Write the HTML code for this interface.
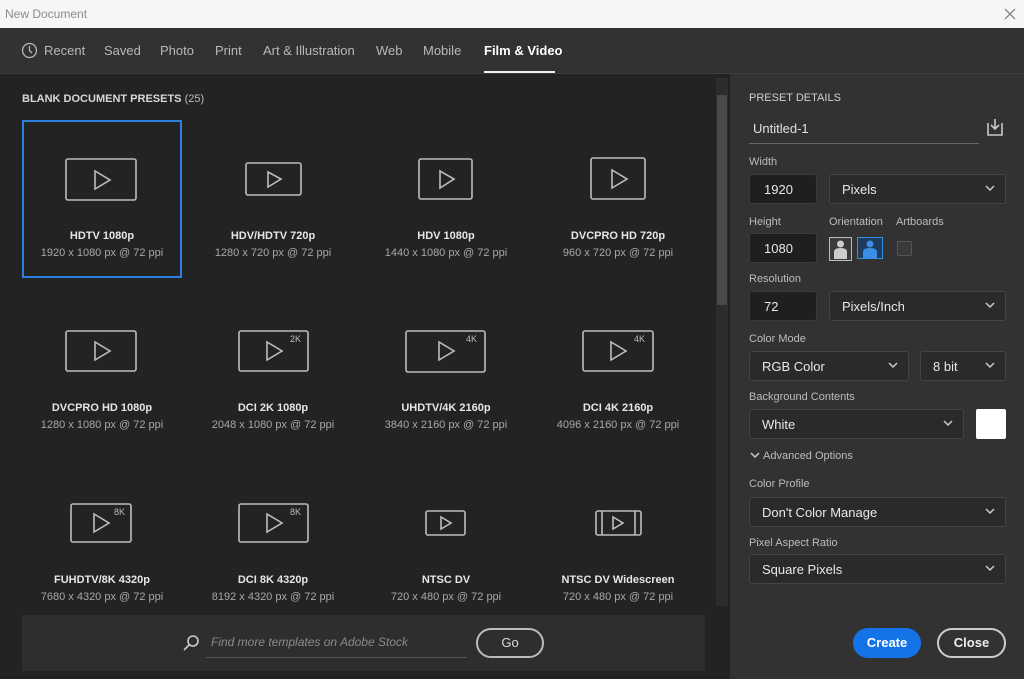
<!DOCTYPE html>
<html><head><meta charset="utf-8"><style>
*{margin:0;padding:0;box-sizing:border-box}
body{width:1024px;height:679px;overflow:hidden;background:#232323;font-family:"Liberation Sans",sans-serif;position:relative;color:#ddd}
.a{position:absolute}
.tab{position:absolute;top:43px;font-size:13px;color:#b8b8b8}
.nm{position:absolute;width:172px;text-align:center;font-size:11px;color:#e6e6e6;font-weight:bold}
.sb{position:absolute;width:172px;text-align:center;font-size:11px;color:#a8a8a8}
.lb{position:absolute;left:749px;font-size:11px;color:#bcbcbc}
.in{position:absolute;background:#1f1f1f;border:1px solid #3a3a3a;border-radius:3px;font-size:13px;color:#e8e8e8;padding-left:14px;display:flex;align-items:center}
.se{position:absolute;background:#2a2a2a;border:1px solid #444;border-radius:3px;font-size:13px;color:#e8e8e8;padding-left:12px;display:flex;align-items:center}
.se svg{position:absolute;right:10px;top:50%;margin-top:-4px}
</style></head><body>
<div class="a" style="left:0;top:0;width:1024px;height:28px;background:#f6f6f6"></div>
<div class="a" style="left:5px;top:7px;font-size:12px;color:#8a8a8a">New Document</div>
<svg class="a" style="left:1004px;top:8px" width="12" height="12"><path d="M1 1L11 11M11 1L1 11" stroke="#888" stroke-width="1.3"/></svg>
<div class="a" style="left:0;top:28px;width:1024px;height:46px;background:#323232;border-bottom:1px solid #3c3c3c"></div>
<svg class="a" style="left:21px;top:42px" width="17" height="17"><circle cx="8.5" cy="8.5" r="7" fill="none" stroke="#b8b8b8" stroke-width="1.3"/><path d="M8.5 4V8.5L11 11" fill="none" stroke="#b8b8b8" stroke-width="1.3"/></svg>
<div class="tab" style="left:44px">Recent</div>
<div class="tab" style="left:104px">Saved</div>
<div class="tab" style="left:160px">Photo</div>
<div class="tab" style="left:215px">Print</div>
<div class="tab" style="left:263px">Art &amp; Illustration</div>
<div class="tab" style="left:376px">Web</div>
<div class="tab" style="left:423px">Mobile</div>
<div class="tab" style="left:484px;color:#fff;font-weight:bold">Film &amp; Video</div>
<div class="a" style="left:484px;top:71px;width:71px;height:2px;background:#eee"></div>
<div class="a" style="left:730px;top:74px;width:294px;height:605px;background:#323232"></div>
<div class="a" style="left:22px;top:93px;font-size:11px;color:#d8d8d8;font-weight:bold">BLANK DOCUMENT PRESETS <span style="font-weight:normal;color:#bbb">(25)</span></div>
<div class="a" style="left:716px;top:78px;width:12px;height:528px;background:#2c2c2c"></div>
<div class="a" style="left:717px;top:95px;width:10px;height:210px;background:#4a4a4a"></div>
<div class="a" style="left:22px;top:120px;width:160px;height:158px;border:2px solid #2f7fe0"></div>
<svg class="a" style="left:0;top:0" width="716" height="610" fill="none" stroke="#bdbdbd" stroke-width="1.6">
<rect x="66" y="159" width="70" height="41" rx="2"/><path d="M95 171V189L110 180Z"/>
<rect x="246" y="163" width="55" height="32" rx="2"/><path d="M268 172V187L281 179Z"/>
<rect x="419" y="159" width="53" height="40" rx="2"/><path d="M440 171V188L454 179Z"/>
<rect x="591" y="158" width="54" height="41" rx="2"/><path d="M612 170V188L627 179Z"/>
<rect x="66" y="331" width="70" height="40" rx="2"/><path d="M95 342V360L110 351Z"/>
<rect x="239" y="331" width="69" height="40" rx="2"/><path d="M267 342V360L282 351Z"/>
<rect x="406" y="331" width="79" height="41" rx="2"/><path d="M439 342V360L454 351Z"/>
<rect x="583" y="331" width="70" height="40" rx="2"/><path d="M611 342V360L626 351Z"/>
<rect x="71" y="504" width="60" height="38" rx="2"/><path d="M94 514V532L109 523Z"/>
<rect x="239" y="504" width="69" height="38" rx="2"/><path d="M267 514V532L282 523Z"/>
<rect x="426" y="511" width="39" height="24" rx="2"/><path d="M441 517V529L451 523Z"/>
<rect x="596" y="511" width="45" height="24" rx="2"/><path d="M602 511V535M635 511V535M613 517V529L623 523Z"/>
</svg>
<div class="a" style="left:290px;top:334px;font-size:9px;color:#bbb">2K</div>
<div class="a" style="left:466px;top:334px;font-size:9px;color:#bbb">4K</div>
<div class="a" style="left:634px;top:334px;font-size:9px;color:#bbb">4K</div>
<div class="a" style="left:114px;top:507px;font-size:9px;color:#bbb">8K</div>
<div class="a" style="left:290px;top:507px;font-size:9px;color:#bbb">8K</div>
<div class="nm" style="left:16px;top:230px">HDTV 1080p</div><div class="sb" style="left:16px;top:247px">1920 x 1080 px @ 72 ppi</div>
<div class="nm" style="left:187px;top:230px">HDV/HDTV 720p</div><div class="sb" style="left:187px;top:247px">1280 x 720 px @ 72 ppi</div>
<div class="nm" style="left:360px;top:230px">HDV 1080p</div><div class="sb" style="left:360px;top:247px">1440 x 1080 px @ 72 ppi</div>
<div class="nm" style="left:532px;top:230px">DVCPRO HD 720p</div><div class="sb" style="left:532px;top:247px">960 x 720 px @ 72 ppi</div>
<div class="nm" style="left:16px;top:402px">DVCPRO HD 1080p</div><div class="sb" style="left:16px;top:419px">1280 x 1080 px @ 72 ppi</div>
<div class="nm" style="left:187px;top:402px">DCI 2K 1080p</div><div class="sb" style="left:187px;top:419px">2048 x 1080 px @ 72 ppi</div>
<div class="nm" style="left:360px;top:402px">UHDTV/4K 2160p</div><div class="sb" style="left:360px;top:419px">3840 x 2160 px @ 72 ppi</div>
<div class="nm" style="left:532px;top:402px">DCI 4K 2160p</div><div class="sb" style="left:532px;top:419px">4096 x 2160 px @ 72 ppi</div>
<div class="nm" style="left:16px;top:574px">FUHDTV/8K 4320p</div><div class="sb" style="left:16px;top:591px">7680 x 4320 px @ 72 ppi</div>
<div class="nm" style="left:187px;top:574px">DCI 8K 4320p</div><div class="sb" style="left:187px;top:591px">8192 x 4320 px @ 72 ppi</div>
<div class="nm" style="left:360px;top:574px">NTSC DV</div><div class="sb" style="left:360px;top:591px">720 x 480 px @ 72 ppi</div>
<div class="nm" style="left:532px;top:574px">NTSC DV Widescreen</div><div class="sb" style="left:532px;top:591px">720 x 480 px @ 72 ppi</div>
<div class="a" style="left:22px;top:615px;width:683px;height:56px;background:#2e2e2e"></div>
<svg class="a" style="left:182px;top:634px" width="18" height="18" fill="none" stroke="#ccc" stroke-width="1.6"><circle cx="11" cy="7" r="5"/><path d="M7.5 10.5L2 16"/></svg>
<div class="a" style="left:211px;top:635px;font-size:12px;font-style:italic;color:#8a8a8a">Find more templates on Adobe Stock</div>
<div class="a" style="left:206px;top:657px;width:261px;height:1px;background:#555"></div>
<div class="a" style="left:476px;top:628px;width:68px;height:30px;border:2px solid #bbb;border-radius:15px;font-size:13px;color:#ddd;text-align:center;line-height:26px">Go</div>
<div class="lb" style="top:92px;color:#cfcfcf">PRESET DETAILS</div>
<div class="a" style="left:753px;top:121px;font-size:13px;color:#e0e0e0">Untitled-1</div>
<div class="a" style="left:749px;top:143px;width:230px;height:1px;background:#666"></div>
<svg class="a" style="left:985px;top:117px" width="20" height="20" fill="none" stroke="#c8c8c8" stroke-width="1.6"><path d="M3 6V18H17V6M10 2V12M6 8L10 12L14 8"/></svg>
<div class="lb" style="top:156px">Width</div>
<div class="in" style="left:749px;top:174px;width:68px;height:30px">1920</div>
<div class="se" style="left:829px;top:174px;width:177px;height:30px">Pixels<svg width="10" height="7"><path d="M1 1L5 5L9 1" fill="none" stroke="#ccc" stroke-width="1.5"/></svg></div>
<div class="lb" style="top:216px">Height</div><div class="lb" style="left:829px;top:216px">Orientation</div><div class="lb" style="left:896px;top:216px">Artboards</div>
<div class="in" style="left:749px;top:233px;width:68px;height:30px">1080</div>
<svg class="a" style="left:829px;top:237px" width="24" height="24"><rect x="0.5" y="0.5" width="22" height="23" fill="#3a3a3a" stroke="#bbb"/><circle cx="11.5" cy="7" r="3.5" fill="#ccc"/><path d="M5 22V15Q5 11 11.5 11Q18 11 18 15V22Z" fill="#ccc"/></svg>
<svg class="a" style="left:857px;top:237px" width="27" height="23"><rect x="0.5" y="0.5" width="25" height="21" fill="#1e3a5c" stroke="#3a8ee6"/><circle cx="13" cy="7" r="3.5" fill="#3a8ee6"/><path d="M6 21V15Q6 11 13 11Q20 11 20 15V21Z" fill="#3a8ee6"/></svg>
<div class="a" style="left:897px;top:241px;width:15px;height:15px;border:1px solid #555;background:#3a3a3a;border-radius:2px"></div>
<div class="lb" style="top:273px">Resolution</div>
<div class="in" style="left:749px;top:291px;width:68px;height:30px">72</div>
<div class="se" style="left:829px;top:291px;width:177px;height:30px">Pixels/Inch<svg width="10" height="7"><path d="M1 1L5 5L9 1" fill="none" stroke="#ccc" stroke-width="1.5"/></svg></div>
<div class="lb" style="top:333px">Color Mode</div>
<div class="se" style="left:749px;top:351px;width:160px;height:30px">RGB Color<svg width="10" height="7"><path d="M1 1L5 5L9 1" fill="none" stroke="#ccc" stroke-width="1.5"/></svg></div>
<div class="se" style="left:920px;top:351px;width:86px;height:30px">8 bit<svg width="10" height="7"><path d="M1 1L5 5L9 1" fill="none" stroke="#ccc" stroke-width="1.5"/></svg></div>
<div class="lb" style="top:391px">Background Contents</div>
<div class="se" style="left:749px;top:409px;width:215px;height:30px">White<svg width="10" height="7"><path d="M1 1L5 5L9 1" fill="none" stroke="#ccc" stroke-width="1.5"/></svg></div>
<div class="a" style="left:976px;top:409px;width:30px;height:30px;background:#fff;border-radius:2px"></div>
<svg class="a" style="left:750px;top:452px" width="10" height="7"><path d="M1 1L5 5L9 1" fill="none" stroke="#ccc" stroke-width="1.5"/></svg>
<div class="lb" style="left:763px;top:450px">Advanced Options</div>
<div class="lb" style="top:478px">Color Profile</div>
<div class="se" style="left:749px;top:497px;width:257px;height:30px">Don't Color Manage<svg width="10" height="7"><path d="M1 1L5 5L9 1" fill="none" stroke="#ccc" stroke-width="1.5"/></svg></div>
<div class="lb" style="top:537px">Pixel Aspect Ratio</div>
<div class="se" style="left:749px;top:554px;width:257px;height:30px">Square Pixels<svg width="10" height="7"><path d="M1 1L5 5L9 1" fill="none" stroke="#ccc" stroke-width="1.5"/></svg></div>
<div class="a" style="left:853px;top:628px;width:68px;height:30px;background:#1473e6;border-radius:15px;font-size:13px;color:#fff;text-align:center;line-height:30px;font-weight:bold">Create</div>
<div class="a" style="left:937px;top:628px;width:69px;height:30px;border:2px solid #ccc;border-radius:15px;font-size:13px;color:#eee;text-align:center;line-height:26px;font-weight:bold">Close</div>
</body></html>
